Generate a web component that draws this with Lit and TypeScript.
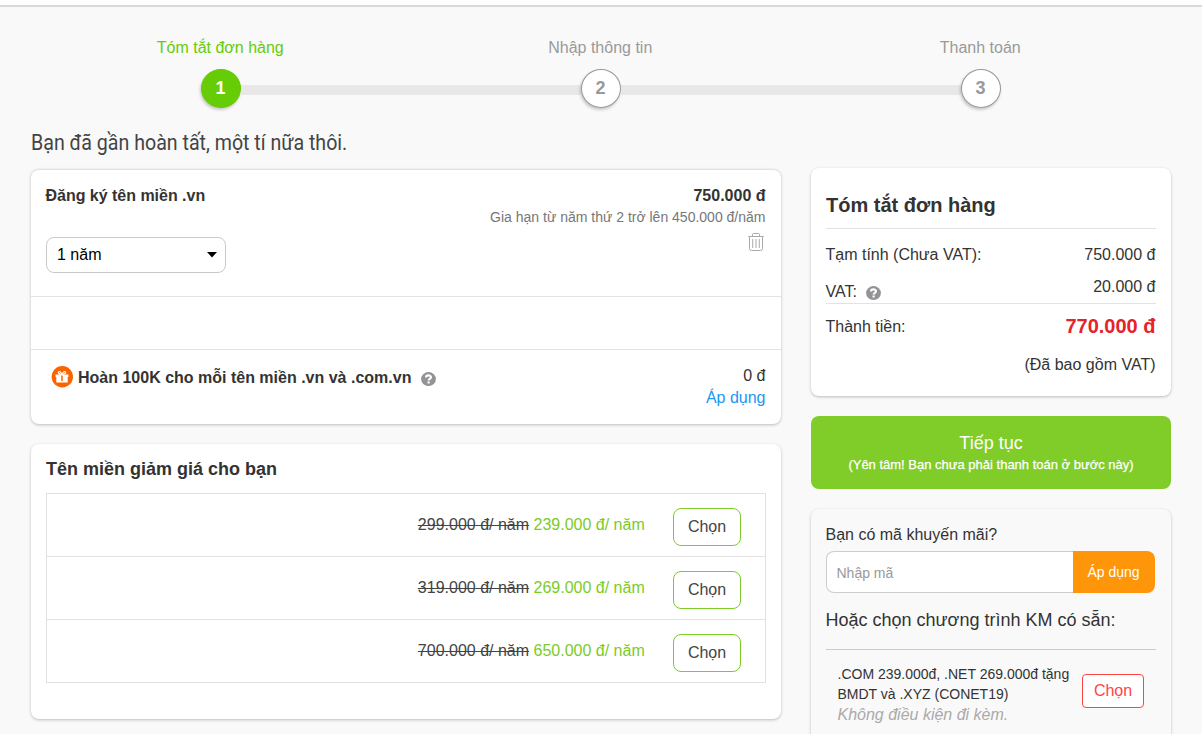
import { LitElement, html, css } from "lit";
import { customElement } from "lit/decorators.js";

@customElement("help-icon")
class HelpIcon extends LitElement {
  static styles = css`
    :host { display: block; width: 15px; height: 15px; flex: none; }
    svg { display: block; }
  `;
  render() {
    return html`<svg width="15" height="15" viewBox="0 0 15 15">
      <ellipse cx="7.5" cy="7.1" rx="7.4" ry="7" fill="#929297" />
      <path d="M5 5.6C5 2.7 10 2.7 10 5.3C10 6.9 7.6 6.8 7.6 8.6" fill="none" stroke="#fff" stroke-width="2.1" />
      <rect x="6.5" y="9.5" width="2.2" height="2" fill="#fff" />
    </svg>`;
  }
}

@customElement("order-steps")
class OrderSteps extends LitElement {
  static styles = css`
    :host { display: block; }
    .steps { display: grid; grid-template-columns: repeat(3, 380px); margin-left: 31px; height: 101px; }
    .step { text-align: center; font-size: 16px; color: #999; }
    .label { display: block; height: 31px; line-height: 20px; padding-right: 1.5px; }
    .rail { display: grid; grid-template-columns: 1fr 40px 1fr; align-items: center; height: 39px; }
    .line { height: 10px; margin-top: 3px; background: #e8e8e8; }
    .first .before, .last .after { background: none; }
    .dot {
      box-sizing: border-box; width: 40px; height: 39px; border-radius: 50%; border: 1px solid #999;
      background: #fff; font-weight: bold; font-size: 18px; line-height: 36px; padding-right: 1px;
      box-shadow: -1px 2px 3px rgba(0, 0, 0, 0.2);
    }
    .first .label { color: #66cc05; }
    .first .dot { background: #66cc05; border-color: #66cc05; color: #fff; }
  `;
  render() {
    const steps = [["first", "Tóm tắt đơn hàng"], ["", "Nhập thông tin"], ["last", "Thanh toán"]];
    return html`<div class="steps">
      ${steps.map(([cls, label], i) => html`<div class="step ${cls}">
        <span class="label">${label}</span>
        <div class="rail"><i class="line before"></i><div class="dot">${i + 1}</div><i class="line after"></i></div>
      </div>`)}
    </div>`;
  }
}

@customElement("app-root")
class AppRoot extends LitElement {
  static styles = css`
    :host {
      display: block; width: 1202px; height: 734px; overflow: hidden; background: #f9f9f9;
      font-family: "Liberation Sans", Arial, sans-serif; font-size: 16px; line-height: 20px; color: #333;
    }
    * { box-sizing: border-box; }
    svg { display: block; }
    .topbar { height: 7px; background: #fff; border-bottom: 2px solid #d9d9d9; margin-bottom: 31px; }
    .headline {
      height: 30px; margin-left: 30.5px; line-height: 30px; font-family: Roboto, sans-serif; font-size: 22px;
      color: #444; white-space: nowrap; transform: scaleX(0.891); transform-origin: 0 0; margin-top: -11px;
    }
    .columns { display: grid; grid-template-columns: 750px 360px; gap: 30px; margin: 10px 0 0 31px; }
    .card { background: #fff; border-radius: 8px; box-shadow: 0 1px 3px rgba(0, 0, 0, 0.25); }
    .row { display: flex; justify-content: space-between; }
    .right { text-align: right; }
    b { font-weight: bold; }

    .order { margin-top: 1px; height: 255px; border-top: 1px solid #e2e2e2; }
    .item { height: 127px; padding: 16px 15.5px 0 14.5px; border-bottom: 1px solid #e3e3e3; }
    .name { letter-spacing: -0.02px; }
    .select {
      display: flex; align-items: center; justify-content: space-between; width: 180px; height: 36px;
      margin: 31px 0 0 0.5px; padding: 0 8px 1px 10px; border: 1px solid #c9c9c9; border-radius: 8px; background: #fff; color: #000;
    }
    .renew { font-size: 14px; line-height: 22px; color: #777; height: 26px; }
    .trash { display: flex; justify-content: flex-end; padding: 1px 1.5px 0 0; }
    .blank { height: 53px; border-bottom: 1px solid #e3e3e3; }
    .cashback { padding: 15px 15.5px 0 20px; }
    .offer { display: flex; height: 24px; line-height: 25px; }
    .offer help-icon { margin: 7px 0 0 10px; }
    .offer svg { margin: 1px 5px 0 0; }
    .apply-link { color: #2196f3; line-height: 22px; }
    .zero { line-height: 22px; }

    .deals { margin-top: 20px; height: 275px; padding: 15px 15px 0; }
    .deals-title { height: 34px; font-size: 18px; line-height: 21px; font-weight: bold; }
    .list { border: 1px solid #e2e2e2; height: 190px; }
    .deal { display: flex; justify-content: flex-end; height: 63px; padding: 14px 24px 0 0; border-bottom: 1px solid #e2e2e2; }
    .deal:last-child { border-bottom: 0; }
    .prices { line-height: 34px; }
    .old { text-decoration: line-through; color: #444; }
    .new { color: #7ccb27; }
    .pick { width: 68px; height: 38px; margin-left: 28.3px; border: 1px solid #7ccb27; border-radius: 8px; text-align: center; line-height: 36px; color: #444; }

    .summary { height: 228px; padding: 26px 15px 0; }
    .summary h2 { margin: 0; height: 35px; font-size: 20px; line-height: 23px; border-bottom: 1px solid #e3e3e3; }
    .summary .row > *, .summary > .right { margin-left: -0.5px; padding-right: 0.5px; }
    .sub { padding-top: 16px; height: 48px; }
    .vat { height: 27px; border-bottom: 1px solid #e3e3e3; }
    .vat-label { display: flex; padding-top: 5px; }
    .vat-label help-icon { margin: 4px 0 0 9.5px; }
    .total { padding-top: 13px; height: 51px; }
    .total .sum { font-size: 20px; line-height: 18px; font-weight: bold; color: #e52329; }
    .continue { margin-top: 20px; height: 73px; padding-top: 17px; border-radius: 8px; background: #80cc28; color: #fff; text-align: center; }
    .go { font-size: 18px; line-height: 21px; }
    .note { font-size: 13px; line-height: 22px; white-space: nowrap; -webkit-text-stroke: 0.25px #fff; }
    .promo { margin-top: 20px; height: 240px; padding: 16px 15px 0; background: #f9f9f9; }
    .question { margin-left: -0.5px; }
    .code { display: flex; height: 42px; width: 329px; margin-top: 6px; font-size: 14px; line-height: 43px; }
    .input { flex: 1; padding-left: 9.5px; line-height: 42px; background: #fff; border: 1px solid #ccc; border-right: 0; border-radius: 8px 0 0 8px; color: #999; }
    .apply { width: 82px; padding-right: 1px; background: #ff960a; color: #fff; text-align: center; border-radius: 0 8px 8px 0; }
    .or { height: 57px; padding-top: 17px; font-size: 18px; line-height: 21px; border-bottom: 1px solid #ccc; white-space: nowrap; text-indent: -0.5px; }
    .program { display: flex; justify-content: space-between; padding: 14px 12px 0 11.5px; }
    .desc { font-size: 14px; white-space: nowrap; }
    .terms { font-size: 16px; line-height: 22px; font-style: italic; color: #aaa; }
    .choose { width: 62px; height: 34px; margin-top: 10px; border: 1px solid #f44; border-radius: 4px; background: #fff; color: #f44; line-height: 31px; text-align: center; }
  `;

  render() {
    const deals = [["299.000", "239.000"], ["319.000", "269.000"], ["700.000", "650.000"]];
    return html`
      <div class="topbar"></div>
      <order-steps></order-steps>
      <div class="headline">Bạn đã gần hoàn tất, một tí nữa thôi.</div>
      <div class="columns">
        <div>
          <div class="card order">
            <div class="item row">
              <div>
                <b class="name">Đăng ký tên miền .vn</b>
                <div class="select">1 năm
                  <svg width="10" height="6" viewBox="0 0 10 6"><path d="M0 0H10L5 5.5Z" fill="#000" /></svg>
                </div>
              </div>
              <div class="right">
                <b>750.000 đ</b>
                <div class="renew">Gia hạn từ năm thứ 2 trở lên 450.000 đ/năm</div>
                <div class="trash">
                  <svg width="16" height="18" viewBox="0 0 16 18" fill="none" stroke="#aaa">
                    <path d="M0.3 3.5H15.7M4.5 3V1.6Q4.5 0.5 5.6 0.5H10.4Q11.5 0.5 11.5 1.6V3M1.5 4V15.5Q1.5 17.5 3.5 17.5H12.5Q14.5 17.5 14.5 15.5V4" />
                    <path d="M4.7 6V15M8 6V15M11.3 6V15" />
                  </svg>
                </div>
              </div>
            </div>
            <div class="blank"></div>
            <div class="cashback row">
              <div class="offer">
                <svg width="22" height="22" viewBox="0 0 22 22">
                  <circle cx="11.3" cy="10.7" r="10.7" fill="#fa6400" />
                  <path d="M4.6 8.5H17.4V11H16.7V16.5H5.3V11H4.6Z" fill="#fff" />
                  <path d="M11 8.5C8.5 8.3 6.5 7 7.6 5.9C8.8 4.9 10.5 6.5 11 8.5C11.5 6.5 13.2 4.9 14.4 5.9C15.5 7 13.5 8.3 11 8.5" fill="none" stroke="#fff" stroke-width="1.1" />
                  <path d="M11 9.5V15" stroke="#fa6400" stroke-width="1.5" />
                </svg>
                <b>Hoàn 100K cho mỗi tên miền .vn và .com.vn</b>
                <help-icon></help-icon>
              </div>
              <div class="right">
                <div class="zero">0 đ</div>
                <div class="apply-link">Áp dụng</div>
              </div>
            </div>
          </div>
          <div class="card deals">
            <div class="deals-title">Tên miền giảm giá cho bạn</div>
            <div class="list">
              ${deals.map(([was, now]) => html`<div class="deal">
                <div class="prices"><span class="old">${was} đ/ năm</span> <span class="new">${now} đ/ năm</span></div>
                <div class="pick">Chọn</div>
              </div>`)}
            </div>
          </div>
        </div>
        <div>
          <div class="card summary">
            <h2>Tóm tắt đơn hàng</h2>
            <div class="row sub"><span>Tạm tính (Chưa VAT):</span><span>750.000 đ</span></div>
            <div class="row vat"><div class="vat-label">VAT: <help-icon></help-icon></div><span>20.000 đ</span></div>
            <div class="row total"><span>Thành tiền:</span><span class="sum">770.000 đ</span></div>
            <div class="right">(Đã bao gồm VAT)</div>
          </div>
          <div class="continue">
            <div class="go">Tiếp tục</div>
            <div class="note">(Yên tâm! Bạn chưa phải thanh toán ở bước này)</div>
          </div>
          <div class="card promo">
            <div class="question">Bạn có mã khuyến mãi?</div>
            <div class="code"><div class="input">Nhập mã</div><div class="apply">Áp dụng</div></div>
            <div class="or">Hoặc chọn chương trình KM có sẵn:</div>
            <div class="program">
              <div class="desc">
                <div>.COM 239.000đ, .NET 269.000đ tặng</div>
                <div>BMDT và .XYZ (CONET19)</div>
                <div class="terms">Không điều kiện đi kèm.</div>
              </div>
              <div class="choose">Chọn</div>
            </div>
          </div>
        </div>
      </div>
    `;
  }
}
